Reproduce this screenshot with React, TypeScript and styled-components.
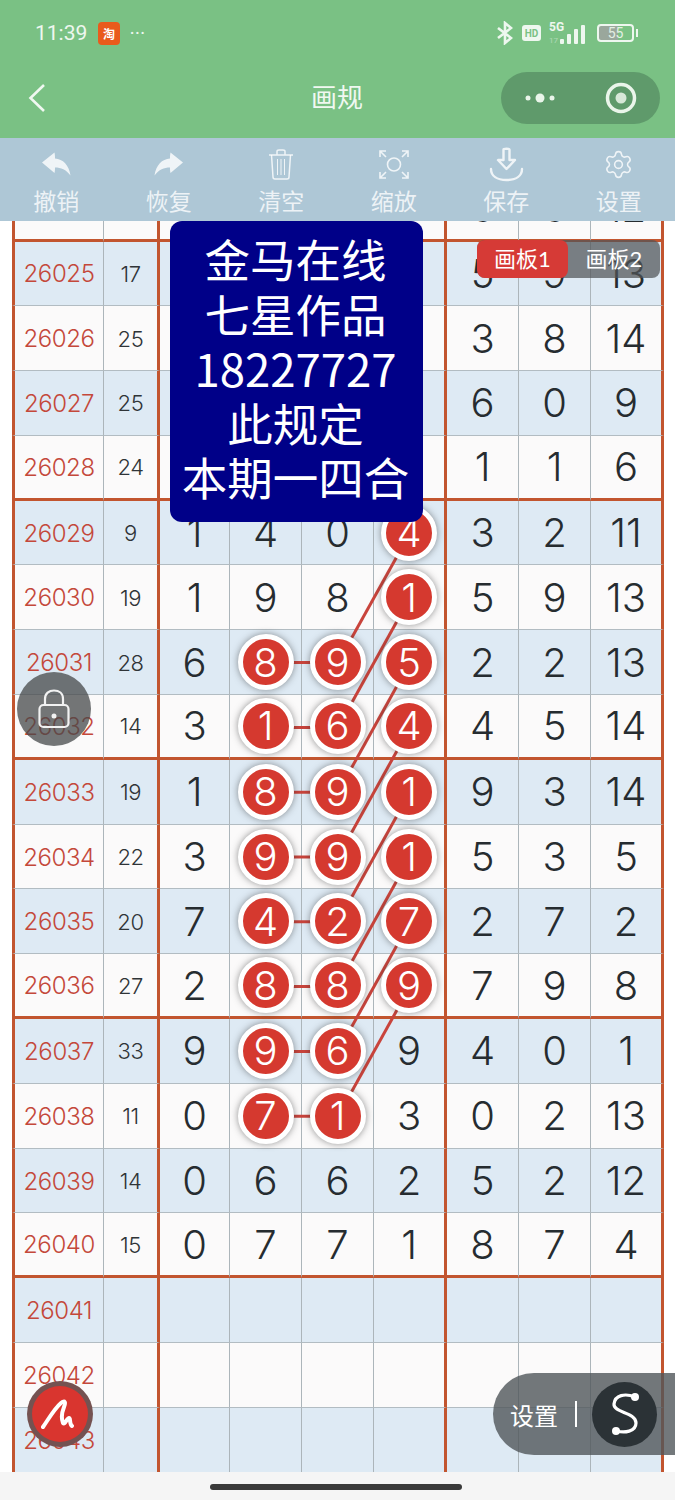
import React from 'react';
import styled, { createGlobalStyle } from 'styled-components';
import { Settings } from 'lucide-react';

const ROW_HEIGHT = 64.8;
const COLUMNS = [92, 56, 70, 72, 72, 73, 72, 72, 73];

interface RowData {
  issue: number;
  sum?: number;
  nums?: number[];
  marks?: number[];
}

const rows: RowData[] = [
  { issue: 26024, nums: [-1, -1, -1, -1, 5, 5, 12] },
  { issue: 26025, sum: 17, nums: [-1, -1, -1, -1, 5, 9, 13] },
  { issue: 26026, sum: 25, nums: [-1, -1, -1, -1, 3, 8, 14] },
  { issue: 26027, sum: 25, nums: [-1, -1, -1, -1, 6, 0, 9] },
  { issue: 26028, sum: 24, nums: [-1, -1, -1, -1, 1, 1, 6] },
  { issue: 26029, sum: 9, nums: [1, 4, 0, 4, 3, 2, 11], marks: [3] },
  { issue: 26030, sum: 19, nums: [1, 9, 8, 1, 5, 9, 13], marks: [3] },
  { issue: 26031, sum: 28, nums: [6, 8, 9, 5, 2, 2, 13], marks: [1, 2, 3] },
  { issue: 26032, sum: 14, nums: [3, 1, 6, 4, 4, 5, 14], marks: [1, 2, 3] },
  { issue: 26033, sum: 19, nums: [1, 8, 9, 1, 9, 3, 14], marks: [1, 2, 3] },
  { issue: 26034, sum: 22, nums: [3, 9, 9, 1, 5, 3, 5], marks: [1, 2, 3] },
  { issue: 26035, sum: 20, nums: [7, 4, 2, 7, 2, 7, 2], marks: [1, 2, 3] },
  { issue: 26036, sum: 27, nums: [2, 8, 8, 9, 7, 9, 8], marks: [1, 2, 3] },
  { issue: 26037, sum: 33, nums: [9, 9, 6, 9, 4, 0, 1], marks: [1, 2] },
  { issue: 26038, sum: 11, nums: [0, 7, 1, 3, 0, 2, 13], marks: [1, 2] },
  { issue: 26039, sum: 14, nums: [0, 6, 6, 2, 5, 2, 12] },
  { issue: 26040, sum: 15, nums: [0, 7, 7, 1, 8, 7, 4] },
  { issue: 26041 },
  { issue: 26042 },
  { issue: 26043 },
];

// row index of the first and last ball of each drawn link
const diagonals = [
  [7, 5], [8, 6], [9, 7], [10, 8], [11, 9], [12, 10], [13, 11], [14, 12],
];
const links = [7, 8, 9, 10, 11, 12, 13, 14];

const rowCenter = (i: number) => i * ROW_HEIGHT + 32;

const GlobalStyle = createGlobalStyle`
  html, body {
    margin: 0;
    padding: 0;
    background: #fff;
    font-family: Inter, "Noto Sans CJK SC", sans-serif;
  }
`;

const Page = styled.div`
  width: 675px;
  height: 1500px;
  display: flex;
  flex-direction: column;
  overflow: hidden;
`;

const Header = styled.header`
  height: 138px;
  flex: none;
  background: #7ac184;
  padding: 20px 15px 0 28px;
  box-sizing: border-box;
  display: flex;
  flex-direction: column;
`;

const StatusBar = styled.div`
  height: 26px;
  display: flex;
  align-items: center;
  color: #eef7ef;
  padding-left: 7px;
`;

const Clock = styled.span`
  font: 400 21px Roboto, sans-serif;
  width: 63px;
`;

const AppBadge = styled.span`
  width: 22px;
  height: 23px;
  border-radius: 4px;
  background: #e95b1c;
  color: #fff;
  font: 700 12px "Noto Sans CJK SC", sans-serif;
  display: flex;
  align-items: center;
  justify-content: center;
`;

const MoreDots = styled.span`
  font: 700 14px Roboto, sans-serif;
  letter-spacing: 1px;
  margin-left: 10px;
`;

const StatusIcons = styled.div`
  margin-left: auto;
  margin-right: 26px;
  display: flex;
  align-items: center;
  gap: 8px;
`;

const HdBadge = styled.span`
  width: 19px;
  height: 16px;
  margin-left: 1px;
  border-radius: 3px;
  background: #eef7ef;
  color: #7ac184;
  font: 700 10px Roboto, sans-serif;
  display: flex;
  align-items: center;
  justify-content: center;
`;

const Battery = styled.span`
  width: 33px;
  height: 14px;
  border: 2px solid #eef7ef;
  border-radius: 4px;
  margin-left: 2px;
  font: 400 14px Roboto, sans-serif;
  text-align: center;
  line-height: 14px;
  color: #e2efe3;
  background: linear-gradient(90deg, #9aa79c 58%, transparent 58%);
  position: relative;
  &::after {
    content: '';
    position: absolute;
    right: -6px;
    top: 3px;
    width: 2px;
    height: 8px;
    background: #eef7ef;
  }
`;

const NavBar = styled.div`
  margin-top: 26px;
  height: 52px;
  display: flex;
  align-items: center;
  position: relative;
`;

const NavTitle = styled.h1`
  position: absolute;
  left: 0;
  right: 0;
  margin: -5px 0 0 -14px;
  text-align: center;
  color: #f0f8f1;
  font: 400 26px "Noto Sans CJK SC", sans-serif;
`;

const Capsule = styled.div`
  margin-left: auto;
  width: 159px;
  height: 52px;
  border-radius: 26px;
  background: #5f9a6b;
  display: flex;
  align-items: center;
  justify-content: space-between;
  padding: 0 23px 0 24px;
  box-sizing: border-box;
`;

const Toolbar = styled.nav`
  height: 83px;
  flex: none;
  background: #aec7d6;
  display: grid;
  grid-template-columns: repeat(6, 1fr);
  position: relative;
  z-index: 3;
`;

const ToolItem = styled.div`
  display: flex;
  flex-direction: column;
  align-items: center;
  color: rgba(255, 255, 255, 0.8);
`;

const ToolIcon = styled.div`
  height: 47px;
  display: flex;
  align-items: center;
  justify-content: center;
  padding-top: 5px;
  box-sizing: border-box;
`;

const ToolLabel = styled.span`
  font: 400 23px/30px "Noto Sans CJK SC", sans-serif;
`;

const Board = styled.main`
  flex: 1;
  position: relative;
  overflow: hidden;
  background: #fff;
`;

const Table = styled.div`
  position: relative;
  margin: -44.3px 0 0 12px;
  width: 652px;
`;

const Row = styled.div`
  display: grid;
  grid-template-columns: ${COLUMNS.map((c) => `${c}px`).join(' ')};
  height: ${ROW_HEIGHT}px;
`;

const Cell = styled.div<{ $alt: boolean; $endGroup: boolean; $thickRight?: boolean; $thickLeft?: boolean }>`
  box-sizing: border-box;
  display: flex;
  align-items: center;
  justify-content: center;
  background: ${(p) => (p.$alt ? '#deeaf4' : '#fbfafa')};
  border-bottom: ${(p) => (p.$endGroup ? '3px solid #c2552f' : '1px solid #b2bcc2')};
  border-right: ${(p) => (p.$thickRight ? '3px solid #c2552f' : '1px solid #acb5ba')};
  border-left: ${(p) => (p.$thickLeft ? '3px solid #c2552f' : 'none')};
  color: #262c30;
  font-size: 40px;
  font-weight: 300;
`;

const Issue = styled.span`
  color: #c4483a;
  font-size: 24px;
  font-weight: 300;
  letter-spacing: -0.4px;
  padding-top: 1px;
`;

const Sum = styled.span`
  color: #2f3437;
  font-size: 22px;
  font-weight: 300;
  letter-spacing: -0.4px;
  padding-top: 1px;
`;

const Ball = styled.span`
  position: relative;
  z-index: 2;
  width: 56px;
  height: 56px;
  box-sizing: border-box;
  border-radius: 50%;
  border: 5px solid #fff;
  background: #d5392f;
  color: #fff;
  font-size: 40px;
  font-weight: 300;
  display: flex;
  align-items: center;
  justify-content: center;
  box-shadow: 0 0 7px rgba(40, 40, 40, 0.5);
`;

const LinkLayer = styled.svg`
  position: absolute;
  left: 0;
  top: 0;
  z-index: 1;
  pointer-events: none;
`;

const Notice = styled.div`
  position: absolute;
  left: 170px;
  top: 0;
  width: 253px;
  height: 301px;
  border-radius: 12px;
  background: #000088;
  color: #fff;
  z-index: 4;
  box-sizing: border-box;
  padding: 10px 2px 0 0;
  text-align: center;
  font: 400 45.5px/54.6px "Noto Sans CJK SC", sans-serif;
`;

const Tabs = styled.div`
  position: absolute;
  left: 477px;
  top: 19px;
  width: 183px;
  height: 38px;
  display: grid;
  grid-template-columns: 91px 92px;
  border-radius: 8px;
  background: rgba(80, 85, 88, 0.72);
  z-index: 4;
`;

const Tab = styled.div<{ $active?: boolean }>`
  border-radius: 8px;
  background: ${(p) => (p.$active ? '#d63a36' : 'transparent')};
  color: #fff;
  font: 400 22px/38px Lato, "Noto Sans CJK SC", sans-serif;
  text-align: center;
`;

const LockButton = styled.div`
  position: absolute;
  left: 17px;
  top: 451px;
  width: 74px;
  height: 74px;
  border-radius: 50%;
  background: rgba(70, 72, 74, 0.75);
  display: flex;
  align-items: center;
  justify-content: center;
  z-index: 4;
`;

const SignButton = styled.div`
  position: absolute;
  left: 27px;
  top: 1160px;
  width: 66px;
  height: 66px;
  box-sizing: border-box;
  border-radius: 50%;
  border: 5px solid rgba(90, 90, 90, 0.8);
  background: #d9352f;
  display: flex;
  align-items: center;
  justify-content: center;
  z-index: 4;
`;

const SettingsPill = styled.div`
  position: absolute;
  left: 493px;
  right: 0;
  top: 1152px;
  height: 82px;
  border-radius: 41px 0 0 41px;
  background: rgba(80, 86, 90, 0.8);
  display: flex;
  align-items: center;
  padding-left: 17px;
  color: #fff;
  font: 400 24px "Noto Sans CJK SC", sans-serif;
  z-index: 4;
`;

const PillDivider = styled.span`
  width: 2px;
  height: 26px;
  background: #fff;
  margin: 0 17px;
`;

const LogoDisc = styled.span`
  width: 65px;
  height: 65px;
  margin-left: -2px;
  border-radius: 50%;
  background: #2b3236;
  display: flex;
  align-items: center;
  justify-content: center;
`;

const HomeBar = styled.footer`
  height: 28px;
  flex: none;
  background: #f5f5f5;
  display: flex;
  justify-content: center;
  padding-top: 12px;
  box-sizing: border-box;
`;

const HomeHandle = styled.span`
  width: 252px;
  height: 6px;
  margin-left: -3px;
  border-radius: 3px;
  background: #3a3a3a;
`;

const UndoIcon = ({ flip }: { flip?: boolean }) => (
  <svg width="29" height="24" viewBox="0 0 29 24" fill="currentColor" style={flip ? { transform: 'scaleX(-1)' } : undefined}>
    <path d="M0 10.5 L12.5 0.5 C13 3 13 4.5 13 6.5 C21 7 27 13 28.5 23.5 C24 17.5 19 15.5 13 15.5 C13 17.5 13 19 12.5 21 Z" />
  </svg>
);

const TrashIcon = () => (
  <svg width="26" height="31" viewBox="0 0 26 31" fill="none" stroke="currentColor" strokeWidth="1.5">
    <path d="M1 6 H25 M9 6 V2.5 C9 1.5 10 1 11 1 H15 C16 1 17 1.5 17 2.5 V6" />
    <path d="M3.5 6 L5 28 C5 29.3 6 30 7 30 H19 C20 30 21 29.3 21 28 L22.5 6" />
    <path d="M9.5 10 V26 M13 10 V26 M16.5 10 V26" strokeWidth="1" />
  </svg>
);

const ZoomIcon = () => (
  <svg width="30" height="29" viewBox="0 0 30 29" fill="none" stroke="currentColor" strokeWidth="1.6">
    <circle cx="15" cy="14.5" r="6.5" />
    <path d="M1 7 V1 H7 M1.5 1.5 L7 7 M23 1 H29 V7 M28.5 1.5 L23 7 M1 22 V28 H7 M1.5 27.5 L7 22 M29 22 V28 H23 M28.5 27.5 L23 22" />
  </svg>
);

const SaveIcon = () => (
  <svg width="35" height="35" viewBox="0 0 35 35" fill="none" stroke="currentColor" strokeWidth="2.4" strokeLinecap="round" strokeLinejoin="round">
    <path d="M14.5 2.5 C14.5 1.5 20.5 1.5 20.5 2.5 V13 H26 L17.5 22 L9 13 H14.5 Z" />
    <path d="M2 22 C2 29 8 33 17.5 33 C27 33 33 29 33 22" />
  </svg>
);

const BluetoothIcon = () => (
  <svg width="16" height="24" viewBox="0 0 16 24" fill="none" stroke="currentColor" strokeWidth="2.6">
    <path d="M1 7 L14 17 L8 22 V2 L14 7 L1 17" />
  </svg>
);

const SignalIcon = () => (
  <svg width="38" height="24" viewBox="0 0 38 24" fill="currentColor">
    <text x="0" y="10" fontSize="12" fontWeight="700" fontFamily="Roboto, sans-serif">5G</text>
    <text x="0" y="22" fontSize="8" opacity="0.45" fontFamily="Roboto, sans-serif">17</text>
    <rect x="11" y="18" width="4" height="5" rx="1" />
    <rect x="18" y="13" width="4" height="10" rx="1" />
    <rect x="25" y="8" width="4" height="15" rx="1" />
    <rect x="32" y="4" width="4" height="19" rx="1" />
  </svg>
);

const LockIcon = () => (
  <svg width="32" height="40" viewBox="0 0 32 40" fill="none" stroke="#f2f2f2" strokeWidth="2.2">
    <rect x="1.5" y="16" width="29" height="22" rx="4" />
    <path d="M7 16 V10 C7 4.5 11 1.5 16 1.5 C21 1.5 25 4.5 25 10 V16" />
    <circle cx="16" cy="27" r="2.5" fill="#f2f2f2" stroke="none" />
  </svg>
);

const App: React.FC = () => {
  const ballX = [254, 326, 398];

  return (
    <>
      <GlobalStyle />
      <Page>
        <Header>
          <StatusBar>
            <Clock>11:39</Clock>
            <AppBadge>淘</AppBadge>
            <MoreDots>···</MoreDots>
            <StatusIcons>
              <BluetoothIcon />
              <HdBadge>HD</HdBadge>
              <SignalIcon />
              <Battery>55</Battery>
            </StatusIcons>
          </StatusBar>
          <NavBar>
            <svg width="18" height="28" viewBox="0 0 18 28" fill="none" stroke="#f0f8f1" strokeWidth="2.6">
              <path d="M16 1 L2.5 14 L16 27" />
            </svg>
            <NavTitle>画规</NavTitle>
            <Capsule>
              <svg width="30" height="12" viewBox="0 0 30 12" fill="#eaf5ea">
                <circle cx="3" cy="6" r="2.5" />
                <circle cx="15" cy="6" r="4.5" />
                <circle cx="27" cy="6" r="2.5" />
              </svg>
              <svg width="32" height="32" viewBox="0 0 32 32" fill="none" stroke="#eaf5ea" strokeWidth="3.5">
                <circle cx="16" cy="16" r="13.5" />
                <circle cx="16" cy="16" r="5.5" fill="#d7e8d8" stroke="none" />
              </svg>
            </Capsule>
          </NavBar>
        </Header>

        <Toolbar>
          <ToolItem>
            <ToolIcon><UndoIcon /></ToolIcon>
            <ToolLabel>撤销</ToolLabel>
          </ToolItem>
          <ToolItem>
            <ToolIcon><UndoIcon flip /></ToolIcon>
            <ToolLabel>恢复</ToolLabel>
          </ToolItem>
          <ToolItem>
            <ToolIcon><TrashIcon /></ToolIcon>
            <ToolLabel>清空</ToolLabel>
          </ToolItem>
          <ToolItem>
            <ToolIcon><ZoomIcon /></ToolIcon>
            <ToolLabel>缩放</ToolLabel>
          </ToolItem>
          <ToolItem>
            <ToolIcon><SaveIcon /></ToolIcon>
            <ToolLabel>保存</ToolLabel>
          </ToolItem>
          <ToolItem>
            <ToolIcon><Settings size={31} strokeWidth={1.2} /></ToolIcon>
            <ToolLabel>设置</ToolLabel>
          </ToolItem>
        </Toolbar>

        <Board>
          <Table>
            {rows.map((row, i) => {
              const alt = i % 2 === 1;
              const endGroup = i % 4 === 0;
              const nums = row.nums ?? [-1, -1, -1, -1, -1, -1, -1];
              return (
                <Row key={row.issue}>
                  <Cell $alt={alt} $endGroup={endGroup} $thickLeft>
                    <Issue>{row.issue}</Issue>
                  </Cell>
                  <Cell $alt={alt} $endGroup={endGroup} $thickRight>
                    <Sum>{row.sum}</Sum>
                  </Cell>
                  {nums.map((n, c) => (
                    <Cell key={c} $alt={alt} $endGroup={endGroup} $thickRight={c === 3 || c === 6}>
                      {row.marks?.includes(c) ? <Ball>{n}</Ball> : n >= 0 ? n : null}
                    </Cell>
                  ))}
                </Row>
              );
            })}
            <LinkLayer width="652" height="1296" stroke="#c9443c" strokeWidth="3">
              {diagonals.map(([from, to]) => (
                <line key={from} x1={ballX[1]} y1={rowCenter(from)} x2={ballX[2]} y2={rowCenter(to)} />
              ))}
              {links.map((r) => (
                <line key={r} x1={ballX[0]} y1={rowCenter(r)} x2={ballX[1]} y2={rowCenter(r)} />
              ))}
            </LinkLayer>
          </Table>

          <Notice>
            金马在线<br />七星作品<br />18227727<br />此规定<br />本期一四合
          </Notice>

          <Tabs>
            <Tab $active>画板1</Tab>
            <Tab>画板2</Tab>
          </Tabs>

          <LockButton><LockIcon /></LockButton>

          <SignButton>
            <svg width="38" height="30" viewBox="0 0 38 30" fill="none" stroke="#fff" strokeWidth="4" strokeLinecap="round" strokeLinejoin="round">
              <path d="M2 28 C7 21 13 10 20 4 C24 1 25 3 23 8 C21 13 20 19 22 24 C24 26 26 19 28 19 C30 19 28 25 31 27" />
            </svg>
          </SignButton>

          <SettingsPill>
            设置
            <PillDivider />
            <LogoDisc>
              <svg width="32" height="46" viewBox="0 0 32 46" fill="none" stroke="#fff" strokeWidth="3.2" strokeLinecap="round">
                <path d="M26 6 C16 2 6 4 5 13 C4 22 27 21 27 32 C27 41 15 42 8 40" />
                <circle cx="26" cy="6" r="4" fill="#fff" stroke="none" />
                <circle cx="7" cy="40" r="4" fill="#fff" stroke="none" />
              </svg>
            </LogoDisc>
          </SettingsPill>
        </Board>

        <HomeBar>
          <HomeHandle />
        </HomeBar>
      </Page>
    </>
  );
};

export default App;
